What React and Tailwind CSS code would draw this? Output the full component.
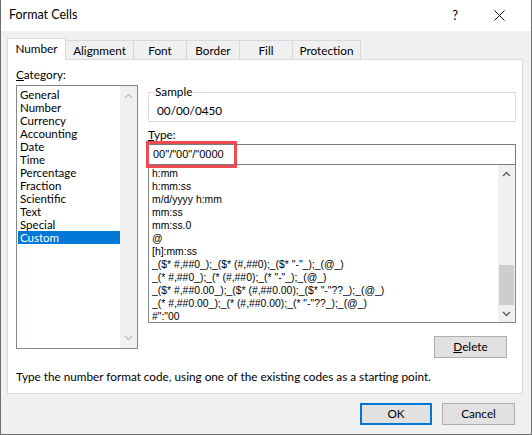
import React from 'react';

const categories = [
  'General', 'Number', 'Currency', 'Accounting', 'Date', 'Time',
  'Percentage', 'Fraction', 'Scientific', 'Text', 'Special', 'Custom',
];

const types = [
  'h:mm',
  'h:mm:ss',
  'm/d/yyyy h:mm',
  'mm:ss',
  'mm:ss.0',
  '@',
  '[h]:mm:ss',
  '_($* #,##0_);_($* (#,##0);_($* "-"_);_(@_)',
  '_(* #,##0_);_(* (#,##0);_(* "-"_);_(@_)',
  '_($* #,##0.00_);_($* (#,##0.00);_($* "-"??_);_(@_)',
  '_(* #,##0.00_);_(* (#,##0.00);_(* "-"??_);_(@_)',
  '#":"00',
];

const tabs = [
  { label: 'Alignment', w: 'w-[68px]' },
  { label: 'Font', w: 'w-[53px]' },
  { label: 'Border', w: 'w-[53px]' },
  { label: 'Fill', w: 'w-[53px]' },
  { label: 'Protection', w: 'w-[68px]' },
];

const mono = { fontFamily: '"Liberation Sans", Arial, sans-serif' };

const Chevron = ({ up, color }) => (
  <svg width="9" height="6" viewBox="0 0 9 6">
    <path
      d={up ? 'M1 5 L4.5 1.5 L8 5' : 'M1 1 L4.5 4.5 L8 1'}
      fill="none"
      stroke={color}
      strokeWidth="1.5"
    />
  </svg>
);

const App = () => {
  return (
    <div
      className="w-[532px] h-[435px] flex flex-col bg-[#f0f0f0] border-l border-r border-b border-[#6d6d6d] text-[11.75px] text-black"
      style={{ fontFamily: 'Lato, "Noto Sans", sans-serif' }}
    >
      {/* Title bar */}
      <div className="h-[31px] bg-white flex items-center justify-between pl-[8px] pr-[26px] shrink-0">
        <span className="text-[12.5px]">Format Cells</span>
        <div className="flex items-center gap-[36px]">
          <span className="text-[13px]">?</span>
          <svg width="11" height="11" viewBox="0 0 11 11">
            <path d="M0.5 0.5 L10.5 10.5 M10.5 0.5 L0.5 10.5" stroke="#111" strokeWidth="1" />
          </svg>
        </div>
      </div>

      <div className="flex flex-col pl-[6px] pt-[7px]">
        {/* Tabs */}
        <div className="flex items-end h-[22px]">
          <div className="w-[59px] h-[22px] bg-white border border-b-0 border-[#d9d9d9] flex items-center justify-center relative z-10 pb-[1px]">
            Number
          </div>
          {tabs.map((t) => (
            <div
              key={t.label}
              className={`${t.w} h-[20px] border-t border-r border-[#d9d9d9] bg-[#f0f0f0] flex items-center justify-center`}
            >
              {t.label}
            </div>
          ))}
        </div>

        {/* Panel */}
        <div className="w-[516px] h-[335px] -mt-px bg-white border border-[#d9d9d9] flex flex-col pt-[7px] pl-[8px]">
          <div className="flex gap-[10px]">
            {/* Category column */}
            <div className="flex flex-col w-[122px]">
              <div className="h-[16px] leading-[16px] mb-[2px]">
                <span className="underline">C</span>ategory:
              </div>
              <div className="h-[264px] border border-[#828790] flex">
                <div className="flex-1 flex flex-col pt-[2px] pl-px text-[11.5px]">
                  {categories.map((c) => (
                    <div
                      key={c}
                      className={`h-[13px] leading-[13px] pl-[2px] ${c === 'Custom' ? 'bg-[#0078d7] text-white' : ''}`}
                    >
                      {c}
                    </div>
                  ))}
                </div>
                <div className="w-[17px] bg-[#f0f0f0] flex flex-col items-center justify-between py-[7px]">
                  <Chevron up color="#c2c2c2" />
                  <Chevron color="#c2c2c2" />
                </div>
              </div>
            </div>

            {/* Right column */}
            <div className="flex flex-col w-[368px]">
              <div className="relative mt-[25px] h-[30px] border border-[#dcdcdc] flex items-end pl-[8px] pb-[2px]">
                <span className="absolute -top-[9px] left-[5px] bg-white px-px leading-[16px]">Sample</span>
                <span className="leading-[16px]">00/00/0450</span>
              </div>

              <div className="h-[16px] leading-[16px] mt-[5px]">
                <span className="underline">T</span>ype:
              </div>

              <div className="relative mt-[1px] h-[21px] border border-[#7a7a7a] flex items-center pl-[4px]">
                <span className="text-[11px]" style={mono}>00"/"00"/"0000</span>
                <div className="absolute -left-[3px] -top-[4px] w-[91px] h-[27px] border-[3px] border-[#ee4b50]" />
              </div>

              <div className="h-[159px] -mt-px border border-[#828790] flex">
                <div
                  className="flex-1 flex flex-col pt-[2px] pl-[3px] text-[10.4px] overflow-hidden whitespace-nowrap"
                  style={mono}
                >
                  {types.map((t, i) => (
                    <div key={i} className="h-[13px] leading-[13px]">
                      {t}
                    </div>
                  ))}
                </div>
                <div className="w-[17px] bg-[#f0f0f0] flex flex-col items-center">
                  <div className="h-[17px] flex items-center justify-center">
                    <Chevron up color="#606060" />
                  </div>
                  <div className="flex-1 w-full flex flex-col justify-end">
                    <div className="h-[40px] bg-[#cdcdcd] mx-px" />
                  </div>
                  <div className="h-[17px] flex items-center justify-center">
                    <Chevron color="#606060" />
                  </div>
                </div>
              </div>

              <div className="flex justify-end pr-[9px] mt-[13px]">
                <button className="w-[73px] h-[22px] bg-[#e1e1e1] border border-[#adadad] flex items-center justify-center">
                  <span><span className="underline">D</span>elete</span>
                </button>
              </div>
            </div>
          </div>

          <div className="mt-[11px] leading-[16px]">
            Type the number format code, using one of the existing codes as a starting point.
          </div>
        </div>

        {/* Footer buttons */}
        <div className="flex justify-end gap-[10px] pr-[16px] pt-[9px]">
          <button className="w-[72px] h-[22px] bg-[#e1e1e1] border-2 border-[#0078d7] flex items-center justify-center">
            OK
          </button>
          <button className="w-[73px] h-[22px] bg-[#e1e1e1] border border-[#adadad] flex items-center justify-center">
            Cancel
          </button>
        </div>
      </div>
    </div>
  );
};

export default App;
